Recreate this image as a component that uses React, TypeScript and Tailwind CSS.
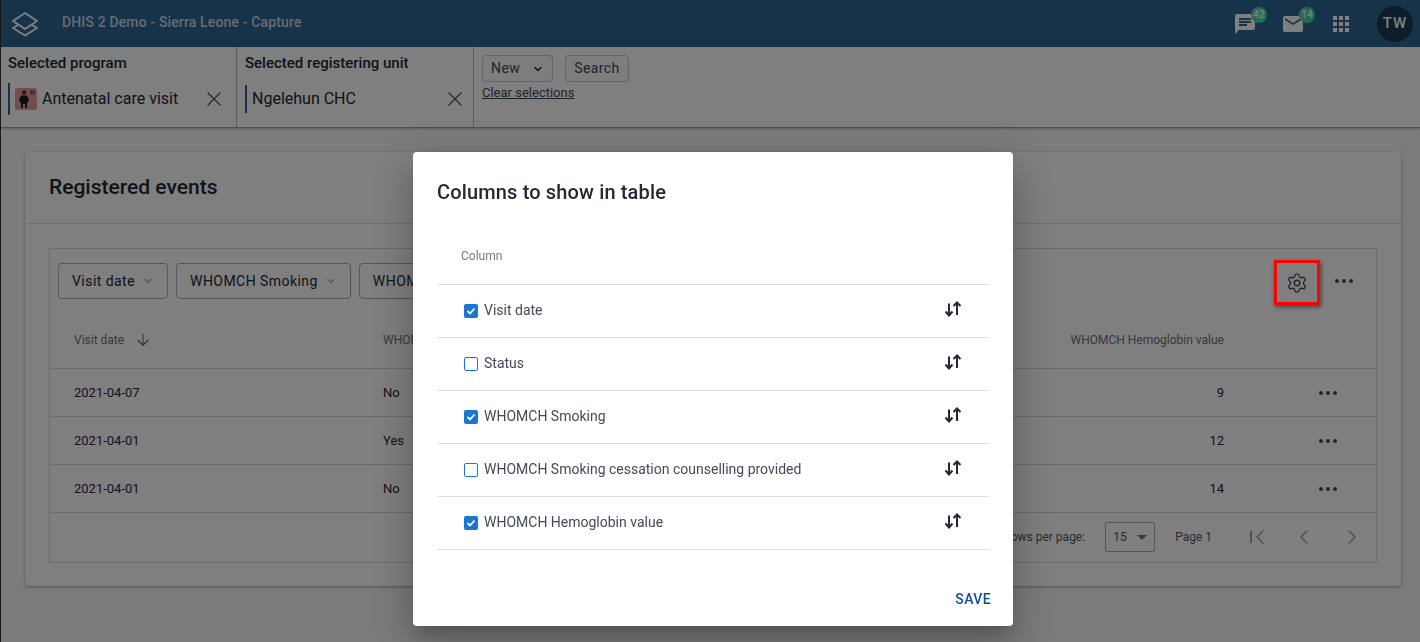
import { Settings, ChevronDown, ArrowDown, ChevronLeft, ChevronRight, X } from 'lucide-react';

const columns = [
  { name: 'Visit date', checked: true },
  { name: 'Status', checked: false },
  { name: 'WHOMCH Smoking', checked: true },
  { name: 'WHOMCH Smoking cessation counselling provided', checked: false },
  { name: 'WHOMCH Hemoglobin value', checked: true },
];

const events = [
  { date: '2021-04-07', smoking: 'No', hb: '9' },
  { date: '2021-04-01', smoking: 'Yes', hb: '12' },
  { date: '2021-04-01', smoking: 'No', hb: '14' },
];

function Dots({ className }: { className: string }) {
  return (
    <svg width="20" height="6" viewBox="0 0 20 6" className={className} fill="currentColor">
      <circle cx="3" cy="3" r="1.9" />
      <circle cx="10" cy="3" r="1.9" />
      <circle cx="17" cy="3" r="1.9" />
    </svg>
  );
}

function Logo() {
  return (
    <svg width="28" height="26" viewBox="0 0 28 26" fill="none" stroke="#fff" strokeWidth="2" strokeLinejoin="round">
      <path d="M14 2 L26 10 L14 18 L2 10 Z" />
      <path d="M7 14 L2 17 L14 24.5 L26 17 L21 14" />
    </svg>
  );
}

function ProgramIcon() {
  return (
    <div className="w-[22px] h-[22px] rounded-[2px] bg-[#e99a9f] flex items-center justify-center shrink-0">
      <svg width="22" height="22" viewBox="0 0 22 22" fill="#1f1f1f">
        <circle cx="9" cy="4.5" r="2" />
        <path d="M6 7.5 h6 l1.5 3 q1 3 -1.5 4.5 v5 h-2 v-4 h-2 v4 h-2 v-5 q-2.5 -1.5 -1.5 -4.5 z" />
        <rect x="16" y="3" width="3" height="3" fill="none" stroke="#1f1f1f" strokeWidth="0.8" />
      </svg>
    </div>
  );
}

function SortArrows() {
  return (
    <svg width="18" height="16" viewBox="0 0 18 16" fill="none" stroke="#212934" strokeWidth="2">
      <path d="M5 2.5 V14" />
      <path d="M1.5 10.5 L5 14.5 L8.5 10.5" />
      <path d="M13 14 V1.5" />
      <path d="M9.5 5 L13 1.5 L16.5 5" />
    </svg>
  );
}

function Checkbox({ checked }: { checked: boolean }) {
  if (checked) {
    return (
      <span className="mt-[1px] w-[14px] h-[14px] rounded-[2px] bg-[#1976d2] flex items-center justify-center shrink-0">
        <svg width="10" height="10" viewBox="0 0 10 10" fill="none" stroke="#fff" strokeWidth="1.8">
          <path d="M1.5 5 L4 7.5 L8.5 2.5" />
        </svg>
      </span>
    );
  }
  return <span className="mt-[1px] w-[14px] h-[14px] rounded-[2px] border border-[#1976d2] bg-white shrink-0" />;
}

function Chip({ label }: { label: string }) {
  return (
    <div className="h-9 shrink-0 pl-[13px] pr-[13px] flex items-center gap-[7px] rounded-[4px] border border-[#a0adc4] bg-white text-[14px] tracking-[0.45px] text-[#212934]">
      {label}
      <ChevronDown size={12} strokeWidth={1.5} />
    </div>
  );
}

export default function App() {
  return (
    <div className="relative h-[642px] overflow-hidden bg-[#f4f6f8] border-l border-[#333] font-['Roboto',sans-serif] text-[#212934]">
      <header className="h-[47px] bg-[#2c6693] flex items-center">
        <div className="w-[49px] h-full flex items-center justify-center border-r border-[#2a6090]">
          <Logo />
        </div>
        <span className="ml-[12px] -mt-[2px] text-[14px] tracking-[0.14px] font-medium text-white/75">DHIS 2 Demo - Sierra Leone - Capture</span>
        <div className="ml-auto flex items-center">
          <div className="relative w-[24px] h-[24px] mr-[24px] text-white">
            <svg width="24" height="24" viewBox="0 0 24 24" fill="currentColor">
              <path d="M20 2H4c-1.1 0-1.99.9-1.99 2L2 22l4-4h14c1.1 0 2-.9 2-2V4c0-1.1-.9-2-2-2zM6 9h12v2H6V9zm8 5H6v-2h8v2zm4-6H6V6h12v2z" />
            </svg>
            <span className="absolute -top-[5px] left-[18px] w-4 h-4 rounded-full bg-[#4fd6ae] text-white text-[10px] font-medium flex items-center justify-center">42</span>
          </div>
          <div className="relative w-[24px] h-[24px] mr-[24px] text-white">
            <svg width="24" height="24" viewBox="0 0 24 24" fill="currentColor">
              <path d="M20 4H4c-1.1 0-1.99.9-1.99 2L2 18c0 1.1.9 2 2 2h16c1.1 0 2-.9 2-2V6c0-1.1-.9-2-2-2zm0 4l-8 5-8-5V6l8 5 8-5v2z" />
            </svg>
            <span className="absolute -top-[5px] left-[18px] w-4 h-4 rounded-full bg-[#4fd6ae] text-white text-[10px] font-medium flex items-center justify-center">14</span>
          </div>
          <svg width="24" height="24" viewBox="0 0 24 24" fill="#fff" className="mr-[24px]">
            <path d="M4 8h4V4H4v4zm6 12h4v-4h-4v4zm-6 0h4v-4H4v4zm0-6h4v-4H4v4zm6 0h4v-4h-4v4zm6-10v4h4V4h-4zm-6 4h4V4h-4v4zm6 6h4v-4h-4v4zm0 6h4v-4h-4v4z" />
          </svg>
          <div className="w-9 h-9 mr-[7px] rounded-full bg-[#1a3a55] text-white text-[15px] font-medium tracking-[1px] flex items-center justify-center">TW</div>
        </div>
      </header>

      <div className="h-[81px] bg-white border-b border-[#a0a0a0] shadow-[0_1px_2px_rgba(0,0,0,0.25)] flex">
        <div className="w-[236px] border-r border-[#b0b8c0] pl-[7px] pr-[6px]">
          <div className="mt-[7px] text-[15px] font-medium leading-[18px]">Selected program</div>
          <div className="mt-[11px] h-[32px] border-l-2 border-[#2c6693] pl-[5px] flex items-center gap-[5px]">
            <ProgramIcon />
            <span className="text-[16px]">Antenatal care visit</span>
            <X size={24} strokeWidth={1.25} className="ml-auto mr-[4px] text-[#555]" />
          </div>
        </div>
        <div className="w-[237px] border-r border-[#b0b8c0] pl-[8px] pr-[6px]">
          <div className="mt-[7px] text-[15px] font-medium leading-[18px]">Selected registering unit</div>
          <div className="mt-[13px] h-[28px] border-l-2 border-[#2c6693] pl-[5px] flex items-center">
            <span className="text-[16px]">Ngelehun CHC</span>
            <X size={24} strokeWidth={1.25} className="ml-auto text-[#555]" />
          </div>
        </div>
        <div className="pl-[8px] pt-[8px]">
          <div className="flex gap-[12px]">
            <div className="h-[27px] w-[71px] px-[8px] flex items-center justify-between rounded-[4px] border border-[#c4c9cc] bg-[#f9fafb] text-[14px] tracking-[0.4px] text-[#404b5a]">
              New
              <ChevronDown size={12} strokeWidth={3} className="text-[#212934]" />
            </div>
            <div className="h-[27px] w-[64px] flex items-center justify-center rounded-[4px] border border-[#c4c9cc] bg-[#f9fafb] text-[14px] tracking-[0.4px] text-[#404b5a]">Search</div>
          </div>
          <div className="mt-[3px] text-[13px] underline leading-[16px] text-[#404b5a]">Clear selections</div>
        </div>
      </div>

      <main className="ml-[24px] mr-[19px] mt-[24px] h-[434px] bg-white rounded-[4px] shadow-[0_1px_3px_rgba(0,0,0,0.35)]">
        <div className="h-[72px] pl-[24px] flex items-center border-b border-[#e0e0e0] text-[21px] font-medium text-[#212934]">Registered events</div>
        <div className="mx-[24px] mt-[24px] h-[315px] border border-[#d5dde5]">
          <div className="h-[72px] pl-[8px] pr-[22px] pt-[14px] flex items-start gap-[8px] overflow-hidden">
            <Chip label="Visit date" />
            <Chip label="WHOMCH Smoking" />
            <Chip label="WHOMCH Hemoglobin value" />
            <div className="ml-auto flex items-start">
              <div className="-mt-[3px] w-[46px] h-[46px] pr-[1px] flex items-center justify-center text-[#404b5a]">
                <Settings size={22} strokeWidth={1.5} />
              </div>
              <Dots className="ml-[14px] mt-[15px] text-[#404b5a]" />
            </div>
          </div>
          <div className="h-[48px] pl-[24px] pb-[10px] flex items-center border-b border-[#d5dde5] text-[12px] text-[#6b7280]">
            <div className="w-[309px] flex items-center gap-[10px]">
              Visit date
              <ArrowDown size={18} strokeWidth={1.5} className="text-[#3b7d6b]" />
            </div>
            <div className="flex-1">WHOMCH Smoking</div>
            <div className="w-[400px] text-right">WHOMCH Hemoglobin value</div>
            <div className="w-[152px]" />
          </div>
          {events.map((e) => (
            <div key={e.date + e.hb} className="h-[48px] pl-[24px] flex items-center border-b border-[#d5dde5] text-[13px]">
              <div className="w-[309px]">{e.date}</div>
              <div className="flex-1">{e.smoking}</div>
              <div className="w-[400px] text-right">{e.hb}</div>
              <div className="w-[152px] flex justify-end pr-[38px]">
                <Dots className="text-[#404b5a]" />
              </div>
            </div>
          ))}
          <div className="h-[48px] flex items-center justify-end text-[12px] text-[#4a5768]">
            <span className="mr-[20px]">Rows per page:</span>
            <div className="w-[50px] h-[30px] mr-[20px] rounded-[2px] border border-[#a0adba] pl-[7px] pr-[7px] flex items-center justify-between">
              15
              <span className="w-0 h-0 border-l-[5px] border-r-[5px] border-t-[5px] border-l-transparent border-r-transparent border-t-[#6e7a8a]" />
            </div>
            <span className="mr-[32px]">Page 1</span>
            <div className="flex items-center mr-[12px] gap-[24px] text-[#9aa5b1]">
              <span className="flex items-center w-[24px] pl-[6px]">
                <span className="w-[1.5px] h-[12px] shrink-0 bg-[#9aa5b1]" />
                <ChevronLeft size={24} strokeWidth={1.5} className="-ml-[4px] shrink-0" />
              </span>
              <ChevronLeft size={24} strokeWidth={1.5} />
              <ChevronRight size={24} strokeWidth={1.5} />
            </div>
          </div>
        </div>
      </main>

      {/* backdrop + dialog */}
      <div className="fixed inset-0 bg-black/50 flex justify-center items-start pl-[6px]">
        <div className="mt-[152px] w-[600px] h-[474px] bg-white rounded-[4px] shadow-[0_11px_15px_-7px_rgba(0,0,0,0.2),0_24px_38px_3px_rgba(0,0,0,0.14),0_9px_46px_8px_rgba(0,0,0,0.12)] flex flex-col">
          <h2 className="pl-[24px] pt-[27px] text-[20px] leading-[26px] tracking-[0.15px] font-medium">Columns to show in table</h2>
          <div className="mx-[24px] mt-[24px] flex-1">
            <div className="h-[56px] pl-[24px] pb-[2px] flex items-center border-b border-[#e0e0e0] text-[12px] text-[#6e7a8a]">Column</div>
            {columns.map((c) => (
              <div key={c.name} className="h-[53px] pl-[27px] pr-[27px] pb-[2px] flex items-center border-b border-[#e0e0e0] text-[14px] text-[#404b5a]">
                <Checkbox checked={c.checked} />
                <span className="ml-[6px]">{c.name}</span>
                <span className="ml-auto -mt-[2px]"><SortArrows /></span>
              </div>
            ))}
          </div>
          <div className="h-[54px] pr-[22px] flex items-start justify-end pt-[17px] text-[14px] font-medium tracking-[0.4px] text-[#0f4c9a]">SAVE</div>
        </div>
      </div>

      {/* red highlight drawn on top of the backdrop */}
      <div className="absolute left-[1273px] top-[260px] w-[46px] h-[45px] border-[3px] border-[#ff0000] shadow-[1px_2px_4px_rgba(0,0,0,0.5)]" />
    </div>
  );
}
